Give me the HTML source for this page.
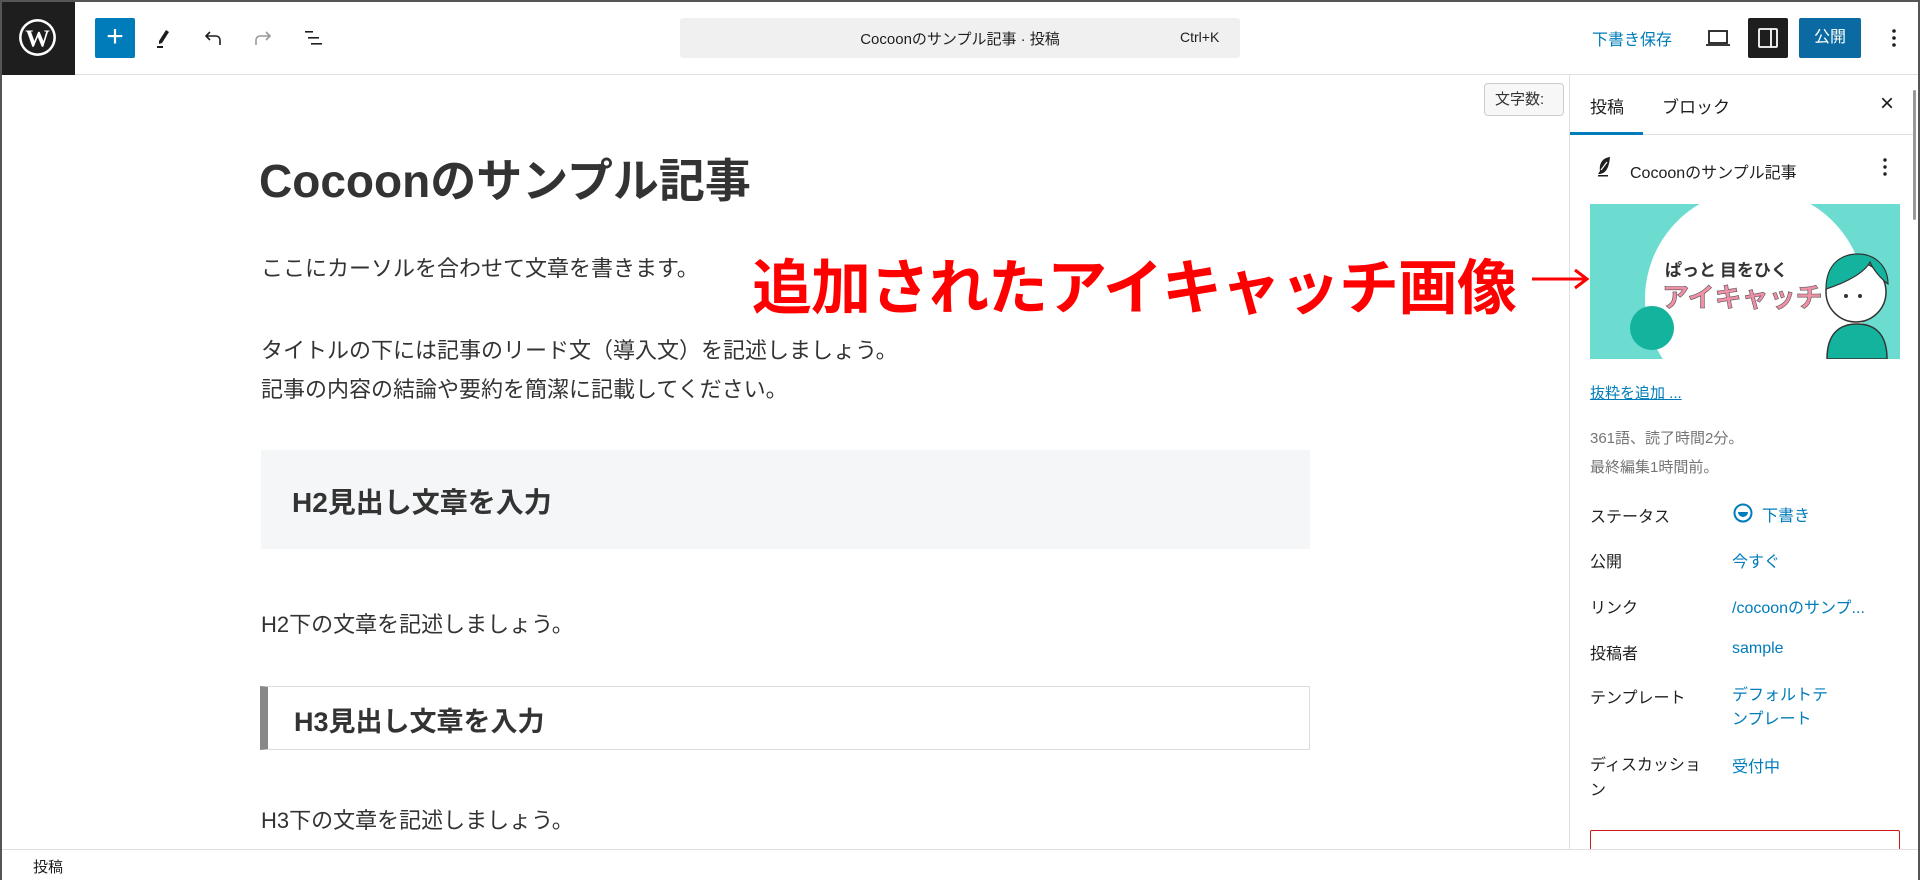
<!DOCTYPE html>
<html><head><meta charset="utf-8"><style>
*{margin:0;padding:0;box-sizing:border-box}
body{width:1920px;height:880px;position:relative;overflow:hidden;background:#fff;font-family:"Liberation Sans","Noto Sans CJK JP",sans-serif;color:#1e1e1e}
.a{position:absolute;white-space:nowrap}
.c{color:#333}
.blue{color:#007cba}
</style></head><body>
<div class="a" style="left:0;top:0;width:1920px;height:880px;border:2px solid #555;border-bottom:none;z-index:50;pointer-events:none"></div>
<!-- top bar -->
<div class="a" style="left:0;top:0;width:1920px;height:75px;border-bottom:1px solid #e0e0e0;background:#fff"></div>
<div class="a" style="left:0;top:0;width:75px;height:75px;background:#1e1e1e"></div>
<svg class="a" style="left:17px;top:17px" width="41" height="41" viewBox="0 0 40 40"><circle cx="20" cy="20" r="18" fill="#fff"/><circle cx="20" cy="20" r="15.5" fill="#1e1e1e"/><text x="20" y="29" text-anchor="middle" font-family="Liberation Serif,serif" font-weight="bold" font-size="24" fill="#fff">W</text></svg>
<div class="a" style="left:95px;top:18px;width:40px;height:40px;background:#007cba;border-radius:2px;color:#fff;font-size:30px;line-height:38px;text-align:center">+</div>
<svg class="a" style="left:152px;top:26px" width="24" height="24" viewBox="0 0 24 24"><path d="M14 4l3 2-7 11-3 1 0-3z" fill="#1e1e1e"/><rect x="5" y="20" width="6" height="2" fill="#1e1e1e"/></svg>
<svg class="a" style="left:202px;top:26px" width="24" height="24" viewBox="0 0 24 24" fill="none" stroke="#1e1e1e" stroke-width="1.6"><path d="M8 6l-4 4 4 4M4 10h10a4 4 0 014 4v5"/></svg>
<svg class="a" style="left:250px;top:26px" width="24" height="24" viewBox="0 0 24 24" fill="none" stroke="#999" stroke-width="1.6"><path d="M16 6l4 4-4 4M20 10H10a4 4 0 00-4 4v5"/></svg>
<svg class="a" style="left:302px;top:26px" width="24" height="24" viewBox="0 0 24 24" fill="#1e1e1e"><rect x="3" y="5" width="8" height="1.6"/><rect x="6" y="11" width="11" height="1.6"/><rect x="9" y="17" width="11" height="1.6"/></svg>
<div class="a" style="left:680px;top:18px;width:560px;height:40px;background:#f0f0f0;border-radius:3px"></div>
<div class="a" style="left:680px;top:28px;width:560px;text-align:center;font-size:15px">Cocoonのサンプル記事 · 投稿</div>
<div class="a" style="left:1180px;top:29px;font-size:14px">Ctrl+K</div>
<div class="a blue" style="left:1592px;top:26px;font-size:16px">下書き保存</div>
<svg class="a" style="left:1705px;top:26px" width="26" height="24" viewBox="0 0 26 24" fill="none" stroke="#1e1e1e" stroke-width="1.8"><rect x="4" y="5" width="18" height="12"/><path d="M1 19h24"/></svg>
<div class="a" style="left:1748px;top:18px;width:40px;height:40px;background:#1e1e1e;border-radius:2px"></div>
<svg class="a" style="left:1756px;top:26px" width="24" height="24" viewBox="0 0 24 24" fill="none" stroke="#fff" stroke-width="1.8"><rect x="3" y="3" width="18" height="18" rx="1"/><path d="M15 3v18"/></svg>
<div class="a" style="left:1799px;top:18px;width:62px;height:40px;background:#0a6aa1;border-radius:2px;color:#fff;font-size:16px;line-height:40px;text-align:center">公開</div>
<svg class="a" style="left:1886px;top:26px" width="16" height="24" viewBox="0 0 16 24" fill="#1e1e1e"><circle cx="8" cy="5" r="1.8"/><circle cx="8" cy="12" r="1.8"/><circle cx="8" cy="19" r="1.8"/></svg>
<!-- content -->
<div class="a" style="left:1484px;top:83px;width:80px;height:33px;border:1px solid #ccc;border-radius:4px;background:#f7f7f7;font-size:15px;line-height:31px;padding-left:10px;color:#333">文字数:</div>
<div class="a c" style="left:259px;top:145px;font-size:46px;font-weight:bold">Cocoonのサンプル記事</div>
<div class="a c" style="left:261px;top:251px;font-size:22px">ここにカーソルを合わせて文章を書きます。</div>
<div class="a c" style="left:261px;top:331px;font-size:22px;line-height:39px">タイトルの下には記事のリード文（導入文）を記述しましょう。<br>記事の内容の結論や要約を簡潔に記載してください。</div>
<div class="a" style="left:261px;top:450px;width:1049px;height:99px;background:#f5f6f7"></div>
<div class="a c" style="left:292px;top:481px;font-size:28px;font-weight:bold">H2見出し文章を入力</div>
<div class="a c" style="left:261px;top:607px;font-size:22px">H2下の文章を記述しましょう。</div>
<div class="a" style="left:260px;top:686px;width:1050px;height:64px;border:1px solid #ddd;border-left:8px solid #888"></div>
<div class="a c" style="left:294px;top:700px;font-size:27px;font-weight:bold">H3見出し文章を入力</div>
<div class="a c" style="left:261px;top:803px;font-size:22px">H3下の文章を記述しましょう。</div>
<!-- sidebar -->
<div class="a" style="left:1569px;top:75px;width:351px;height:775px;border-left:1px solid #e0e0e0;background:#fff"></div>
<div class="a" style="left:1570px;top:134px;width:345px;height:1px;background:#e0e0e0"></div>
<div class="a" style="left:1570px;top:132px;width:73px;height:3px;background:#007cba"></div>
<div class="a" style="left:1590px;top:93px;font-size:17px">投稿</div>
<div class="a" style="left:1662px;top:93px;font-size:17px">ブロック</div>
<div class="a" style="left:1880px;top:90px;font-size:24px">×</div>
<div class="a" style="left:1913px;top:90px;width:3px;height:130px;background:#999;border-radius:2px"></div>
<svg class="a" style="left:1594px;top:155px" width="20" height="24" viewBox="0 0 20 24"><path d="M16 2C8 3 5 9 6 16l-2 3h2c6-1 9-6 10-17z" fill="#1e1e1e"/><path d="M7 15l6-8" stroke="#fff" stroke-width="1.2"/><rect x="4" y="20" width="10" height="1.5" fill="#1e1e1e"/></svg>
<div class="a" style="left:1630px;top:159px;font-size:16px">Cocoonのサンプル記事</div>
<svg class="a" style="left:1877px;top:155px" width="16" height="24" viewBox="0 0 16 24" fill="#1e1e1e"><circle cx="8" cy="5" r="1.7"/><circle cx="8" cy="12" r="1.7"/><circle cx="8" cy="19" r="1.7"/></svg>
<svg class="a" style="left:1590px;top:204px" width="310" height="155" viewBox="0 0 310 155">
<rect width="310" height="155" fill="#6bdccf"/>
<circle cx="165" cy="95" r="110" fill="#fff"/>
<circle cx="62" cy="124" r="22" fill="#14b39d"/>
<text x="75" y="72" font-size="17" font-weight="bold" fill="#333" font-family="Noto Sans CJK JP,sans-serif">ぱっと 目をひく</text>
<text x="72" y="103" font-size="27" font-weight="bold" fill="#f08fa5" stroke="#555" stroke-width=".6" font-family="Noto Sans CJK JP,sans-serif">アイキャッチ</text>
<path d="M237 155c0-25 12-35 30-35s30 10 30 35z" fill="#14b39d" stroke="#333" stroke-width="1.5"/>
<circle cx="266" cy="88" r="30" fill="#fff" stroke="#333" stroke-width="1.5"/>
<path d="M236 85c0-25 15-35 32-35s30 12 30 30c-8-6-15-15-18-22-5 10-22 20-44 27z" fill="#14b39d" stroke="#333" stroke-width="1.2"/>
<circle cx="256" cy="92" r="2" fill="#333"/><circle cx="270" cy="92" r="2" fill="#333"/>
</svg>
<!-- annotation on top -->
<div class="a" style="left:752px;top:240px;font-size:60px;font-weight:bold;color:#f00;letter-spacing:-1px;z-index:20">追加されたアイキャッチ画像</div>
<svg class="a" style="left:1532px;top:266px;z-index:20" width="58" height="26" viewBox="0 0 58 26"><path d="M0 13h54" stroke="#f00" stroke-width="3"/><path d="M43 4l12 9-12 9" fill="none" stroke="#f00" stroke-width="3"/></svg>
<div class="a blue" style="left:1590px;top:382px;font-size:15px;text-decoration:underline">抜粋を追加 ...</div>
<div class="a" style="left:1590px;top:424px;font-size:15px;color:#757575;line-height:29px">361語、読了時間2分。<br>最終編集1時間前。</div>
<div class="a" style="left:1590px;top:503px;font-size:16px">ステータス</div>
<svg class="a" style="left:1732px;top:502px" width="22" height="22" viewBox="0 0 22 22"><circle cx="11" cy="11" r="8.5" fill="none" stroke="#007cba" stroke-width="2"/><path d="M6 10h10a5 5 0 01-10 0z" fill="#007cba"/></svg>
<div class="a blue" style="left:1762px;top:502px;font-size:16px">下書き</div>
<div class="a" style="left:1590px;top:548px;font-size:16px">公開</div>
<div class="a blue" style="left:1732px;top:548px;font-size:16px">今すぐ</div>
<div class="a" style="left:1590px;top:594px;font-size:16px">リンク</div>
<div class="a blue" style="left:1732px;top:594px;font-size:16px">/cocoonのサンプ...</div>
<div class="a" style="left:1590px;top:640px;font-size:16px">投稿者</div>
<div class="a blue" style="left:1732px;top:640px;font-size:16px">sample</div>
<div class="a" style="left:1590px;top:684px;font-size:16px">テンプレート</div>
<div class="a blue" style="left:1732px;top:684px;font-size:16px;line-height:24px">デフォルトテ<br>ンプレート</div>
<div class="a" style="left:1590px;top:753px;font-size:16px;line-height:25px">ディスカッショ<br>ン</div>
<div class="a blue" style="left:1732px;top:753px;font-size:16px">受付中</div>
<div class="a" style="left:1590px;top:830px;width:310px;height:30px;border:1px solid #cc1818;border-bottom:none;border-radius:2px 2px 0 0"></div>
<!-- footer -->
<div class="a" style="left:0;top:849px;width:1920px;height:31px;background:#fff;border-top:1px solid #e0e0e0"></div>
<div class="a" style="left:33px;top:856px;font-size:15px">投稿</div>
</body></html>
